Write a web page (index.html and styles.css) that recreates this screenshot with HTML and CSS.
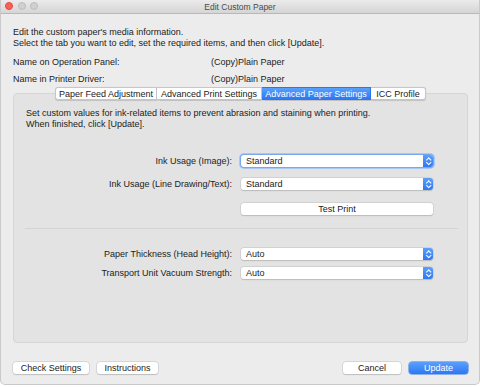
FILE: index.html
```html
<!DOCTYPE html>
<html lang="en">

<head>
    <meta charset="UTF-8">
    <meta name="viewport" content="width=device-width, initial-scale=1.0">
    <title>Edit Custom Paper</title>
    <link rel="stylesheet" href="styles.css">
</head>

<body>
    <div class="window">
        <div class="titlebar">
            <div class="lights">
                <span class="light red"></span>
                <span class="light"></span>
                <span class="light"></span>
            </div>
            <div class="title">Edit Custom Paper</div>
        </div>

        <div class="content">
            <p class="intro">Edit the custom paper's media information.<br>
                Select the tab you want to edit, set the required items, and then click [Update].</p>

            <div class="names">
                <div class="name-row">
                    <span class="name-label">Name on Operation Panel:</span>
                    <span>(Copy)Plain Paper</span>
                </div>
                <div class="name-row">
                    <span class="name-label">Name in Printer Driver:</span>
                    <span>(Copy)Plain Paper</span>
                </div>
            </div>

            <div class="tabbox">
                <div class="tabs">
                    <div class="tab">Paper Feed Adjustment</div>
                    <div class="tab">Advanced Print Settings</div>
                    <div class="tab active">Advanced Paper Settings</div>
                    <div class="tab">ICC Profile</div>
                </div>
                <div class="panel">
                    <p class="panel-text">Set custom values for ink-related items to prevent abrasion and staining when printing.<br>
                        When finished, click [Update].</p>

                    <div class="form">
                        <div class="row">
                            <label>Ink Usage (Image):</label>
                            <div class="select focus">Standard<span class="arrows"></span></div>
                        </div>
                        <div class="row">
                            <label>Ink Usage (Line Drawing/Text):</label>
                            <div class="select">Standard<span class="arrows"></span></div>
                        </div>
                        <div class="row test-row">
                            <span></span>
                            <button class="btn wide">Test Print</button>
                        </div>
                    </div>

                    <hr class="sep">

                    <div class="form lower">
                        <div class="row">
                            <label>Paper Thickness (Head Height):</label>
                            <div class="select">Auto<span class="arrows"></span></div>
                        </div>
                        <div class="row">
                            <label>Transport Unit Vacuum Strength:</label>
                            <div class="select">Auto<span class="arrows"></span></div>
                        </div>
                    </div>
                </div>
            </div>

            <div class="footer">
                <div class="btn-group">
                    <button class="btn check">Check Settings</button>
                    <button class="btn instr">Instructions</button>
                </div>
                <div class="btn-group">
                    <button class="btn cancel">Cancel</button>
                    <button class="btn primary">Update</button>
                </div>
            </div>
        </div>
    </div>
</body>

</html>
```

FILE: styles.css
```css
body {
    margin: 0;
    background-color: #ffffff;
    font-family: "Liberation Sans", Arial, sans-serif;
    font-size: 9px;
    color: #222222;
}

.window {
    width: 480px;
    height: 385px;
    background-color: #ececec;
    border: 1px solid #c9c9c9;
    border-top: none;
    border-radius: 0 0 5px 5px;
    box-sizing: border-box;
    overflow: hidden;
}

.titlebar {
    position: relative;
    height: 13px;
    background: linear-gradient(#ebebeb, #d5d5d5);
    border-bottom: 1px solid #b8b8b8;
    display: flex;
    align-items: center;
    justify-content: center;
}

.lights {
    position: absolute;
    left: 4px;
    top: 2px;
    display: flex;
    gap: 4.5px;
}

.light {
    width: 8px;
    height: 8px;
    border-radius: 50%;
    background-color: #d0d0d0;
    border: 0.5px solid #bdbdbd;
    box-sizing: border-box;
}

.light.red {
    background-color: #fc5f57;
    border-color: #de4a42;
}

.title {
    font-size: 8.5px;
    color: #4a4a4a;
}

.content {
    padding: 0 11px 0 12px;
}

.intro {
    margin: 13px 0 0 0;
    line-height: 11px;
}

.names {
    margin-top: 8px;
    display: flex;
    flex-direction: column;
    gap: 6px;
}

.name-row {
    display: flex;
    line-height: 11px;
}

.name-label {
    width: 198px;
}

.tabbox {
    margin-top: 2px;
    position: relative;
}

.tabs {
    display: flex;
    justify-content: center;
    position: relative;
    z-index: 1;
}

.tab {
    height: 13px;
    line-height: 12px;
    box-sizing: border-box;
    padding: 0;
    white-space: nowrap;
    background-color: #ffffff;
    border: 1px solid #c6c6c6;
    border-left: none;
    box-shadow: 0 0.5px 1px rgba(0, 0, 0, 0.15);
    text-align: center;
}

.tab:first-child {
    border-left: 1px solid #c6c6c6;
    border-radius: 3px 0 0 3px;
    width: 102px;
}

.tab:nth-child(2) {
    width: 105px;
}

.tab.active {
    width: 109px;
    background: linear-gradient(#5aa0fb, #2c78f4);
    border-color: #2f76e8;
    color: #ffffff;
}

.tab:last-child {
    border-radius: 0 3px 3px 0;
    width: 55px;
}

.panel {
    margin-top: -7px;
    height: 250px;
    background-color: #e3e3e3;
    border: 1px solid #d6d6d6;
    border-radius: 4px;
    box-sizing: border-box;
    padding: 14px 10px 0 12px;
}

.panel-text {
    margin: 0;
    line-height: 11px;
}

.form {
    margin-top: 25px;
    display: flex;
    flex-direction: column;
    gap: 11px;
}

.row {
    display: grid;
    grid-template-columns: 1fr 192px;
    column-gap: 9px;
    align-items: center;
    padding-right: 24px;
}

.row label {
    text-align: right;
}

.select {
    position: relative;
    height: 12px;
    line-height: 12px;
    background-color: #ffffff;
    border-radius: 3px;
    box-shadow: 0 0 0 0.5px #c4c4c4, 0 0.5px 1px rgba(0, 0, 0, 0.2);
    padding-left: 5px;
}

.select.focus {
    box-shadow: 0 0 0 1px #7aa7ee, 0 0 0 2px #a9c7f5;
}

.arrows {
    position: absolute;
    right: 0;
    top: 0;
    width: 10px;
    height: 12px;
    border-radius: 0 3px 3px 0;
    background: linear-gradient(#5aa0fb, #2c78f4);
}

.arrows::before,
.arrows::after {
    content: "";
    position: absolute;
    left: 3.5px;
    width: 2.5px;
    height: 2.5px;
    border-left: 1px solid #ffffff;
    border-top: 1px solid #ffffff;
}

.arrows::before {
    top: 2.5px;
    transform: rotate(45deg);
}

.arrows::after {
    top: 5.5px;
    transform: rotate(225deg);
}

.btn {
    font-family: inherit;
    font-size: 9px;
    color: #222222;
    height: 12px;
    line-height: 12px;
    padding: 0;
    margin: 0;
    background-color: #ffffff;
    border: none;
    border-radius: 3px;
    box-shadow: 0 0 0 0.5px #c4c4c4, 0 0.5px 1px rgba(0, 0, 0, 0.2);
}

.test-row {
    margin-top: 2px;
}

.sep {
    border: none;
    border-top: 1px solid #d3d3d3;
    margin: 13px -1px 0 -1px;
}

.lower {
    margin-top: 19px;
    gap: 7px;
}

.footer {
    margin-top: 19px;
    display: flex;
    justify-content: space-between;
}

.btn-group {
    display: flex;
    gap: 8px;
}

.btn.check {
    width: 76px;
}

.btn.instr {
    width: 61px;
}

.btn.cancel {
    width: 58px;
}

.btn.primary {
    width: 59px;
    background: linear-gradient(#5aa0fb, #2c78f4);
    box-shadow: 0 0 0 0.5px #2f76e8;
    color: #ffffff;
}
```
